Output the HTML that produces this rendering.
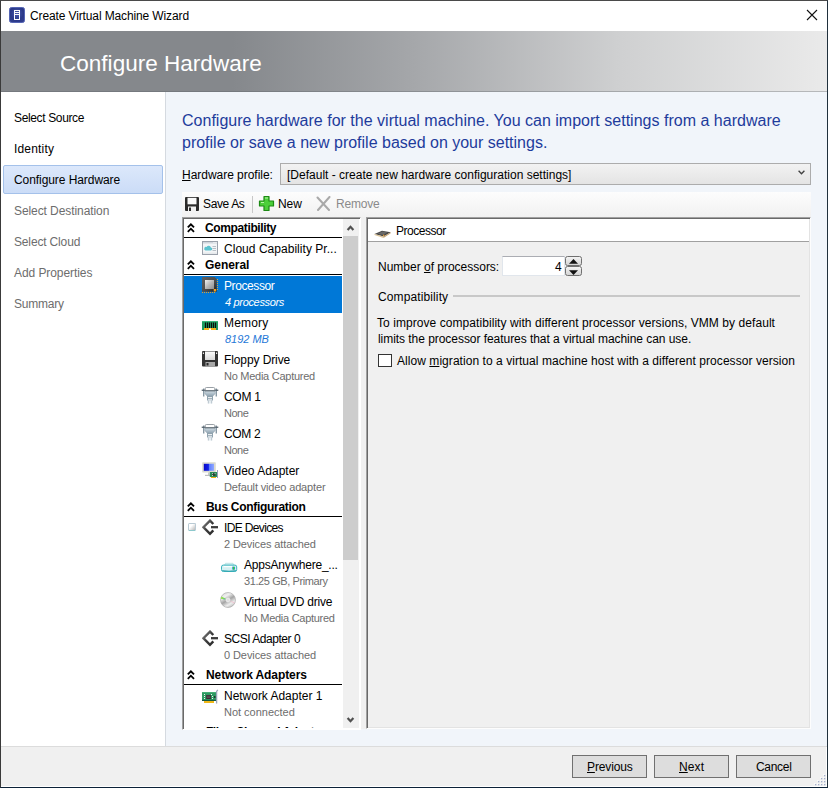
<!DOCTYPE html>
<html><head><meta charset="utf-8">
<style>
*{box-sizing:border-box;margin:0;padding:0}
html,body{width:828px;height:788px;overflow:hidden;background:#fff}
body{font-family:"Liberation Sans",sans-serif;font-size:12px;color:#000;position:relative}
div,svg{position:absolute}
#win{left:0;top:0;width:828px;height:788px;border:1px solid;border-color:#4a4a4a #20303c #0c2238 #3a3a3a;background:#fff}
#title{left:30px;top:8px;font-size:12px;line-height:16px;white-space:nowrap;letter-spacing:-0.11px}
#hdr{left:1px;top:31px;width:826px;height:61px;background:linear-gradient(90deg,#85888c 0%,#85888c 28%,#a5a7aa 50%,#cfd0d1 75%,#eaeaea 100%);border-bottom:1px solid rgba(90,94,100,0.35)}
#hdr span{position:absolute;left:59px;top:18px;font-size:22.5px;line-height:28px;color:#fff;white-space:nowrap}
#side{left:1px;top:92px;width:164px;height:654px;background:#fff}
#sideb{left:165px;top:92px;width:1px;height:654px;background:#d5dae0}
.nav{left:14px;font-size:12px;line-height:16px;white-space:nowrap;color:#000;letter-spacing:-0.15px}
.nav.dim{color:#6d6d6d}
#sel{left:3px;top:165px;width:160px;height:29px;border:1px solid #a4c1ea;border-radius:2px;background:linear-gradient(180deg,#dce8fb,#cbdcf7)}
#main{left:166px;top:92px;width:661px;height:654px;background:#f1f5fa}
#foot{left:1px;top:746px;width:826px;height:41px;background:#f0f0f0;border-top:1px solid #dcdcdc}
.btn{top:755px;width:75px;height:23px;border:1px solid #707070;background:#dddddd;font-size:12px;line-height:21px;text-align:center}
.h{left:182px;font-size:16px;line-height:22px;color:#1e3c9c;white-space:nowrap}
u{text-decoration:underline}
#hpl{left:182px;top:167px;line-height:16px;white-space:nowrap}
#combo{left:280px;top:163px;width:531px;height:22px;border:1px solid #acacac;background:linear-gradient(180deg,#f2f2f2,#e4e4e4)}
#combo span{position:absolute;left:5px;top:3px;line-height:16px;white-space:nowrap}
#tb{left:182px;top:192px;width:629px;height:25px;background:linear-gradient(180deg,#fdfdfd,#f1f1f1)}
.tbt{top:196px;line-height:16px;white-space:nowrap}
#tree{left:182px;top:217px;width:179px;height:513px;background:#fff;border:1px solid;border-color:#a0a0a0 #fff #fff #a0a0a0;box-shadow:inset 1px 1px 0 #696969,inset -1px -1px 0 #fff}
#treein{left:0;top:0;width:828px;height:728px;clip-path:inset(219px 486px 0 184px)}
.gh{left:205px;font-weight:bold;line-height:16px;white-space:nowrap;letter-spacing:-0.6px}
.chev{left:186.5px;width:8px;height:10px}
.gl{left:184px;width:158px;height:1px;background:#000}
.it{line-height:16px;white-space:nowrap;letter-spacing:-0.1px}
.sub{color:#6d6d6d;font-size:12px}
.subw{color:#fff;font-style:italic}
.subb{color:#1f78d8;font-style:italic}
.w{color:#fff}
.selrow{left:184px;width:158px;height:37px;background:#0078d7}
.clipb{left:183px;top:721px;width:160px;height:7px;overflow:hidden}
.exp{width:8px;height:8px;border:1px solid #b9cad4;border-bottom-color:#8cc8cc;border-radius:1.5px;background:linear-gradient(135deg,#fff 35%,#b8b8b8)}
#sb{left:343px;top:219px;width:16px;height:509px;background:#f0f0f0}
#thumb{left:343px;top:236px;width:15px;height:324px;background:#cdcdcd}
#pan{left:366px;top:217px;width:445px;height:512px;background:#f0f0f0;border:1px solid;border-color:#a0a0a0 #fdfdfd #fdfdfd #a0a0a0;box-shadow:inset 1px 1px 0 #696969,inset -1px -1px 0 #e3e3e3}
#panh{left:368px;top:219px;width:441px;height:23px;background:#fff;border-bottom:1px solid #a0a0a0}
.t{line-height:16px;white-space:nowrap}
#spin{left:502px;top:256px;width:63px;height:20px;background:#fff;border:1px solid #e1e6ec;border-top-color:#abadb3}
.sbn{left:565px;width:17px;height:10px;border:1px solid #707070;border-radius:2.5px;background:linear-gradient(#f4f4f4,#d4d4d4)}
#chk{left:378px;top:354px;width:14px;height:13px;border:1px solid #333;background:#fff}
</style></head><body>
<div id="win"></div>
<svg style="left:9px;top:7px" width="16" height="16" viewBox="0 0 16 16"><defs><radialGradient id="ti" cx="0.5" cy="0.4" r="0.7"><stop offset="0" stop-color="#4a5cb0"/><stop offset="0.6" stop-color="#2a3888"/><stop offset="1" stop-color="#323f90"/></radialGradient></defs><rect x="0.5" y="0.5" width="15" height="15" rx="2" fill="url(#ti)" stroke="#5565b4"/><rect x="5.5" y="3.5" width="5" height="9" fill="none" stroke="#fbfbfd" stroke-width="1"/><rect x="6" y="5" width="4" height="1" fill="#fbfbfd"/><rect x="6" y="7" width="4" height="1" fill="#fbfbfd"/></svg>
<div class="t" style="left:30px;top:8px;letter-spacing:-0.122px">Create Virtual Machine Wizard</div>
<svg style="left:804px;top:7px" width="16" height="16" viewBox="0 0 16 16"><path d="M3 3 L13 13 M13 3 L3 13" stroke="#111" stroke-width="1.1"/></svg>
<div id="hdr"></div><div class="t" style="font-size:22.5px;line-height:28px;color:#fff;left:60px;top:50px;letter-spacing:0.023px">Configure Hardware</div>
<div id="side"></div><div id="sideb"></div>
<div id="sel"></div>
<div class="t" style="left:14px;top:110px;letter-spacing:-0.358px">Select Source</div><div class="t" style="left:14px;top:141px;letter-spacing:0.171px">Identity</div><div class="t" style="left:14px;top:172px;letter-spacing:-0.071px">Configure Hardware</div><div class="t" style="color:#6d6d6d;left:14px;top:203px;letter-spacing:-0.082px">Select Destination</div><div class="t" style="color:#6d6d6d;left:14px;top:234px;letter-spacing:-0.155px">Select Cloud</div><div class="t" style="color:#6d6d6d;left:14px;top:265px;letter-spacing:-0.077px">Add Properties</div><div class="t" style="color:#6d6d6d;left:14px;top:296px;letter-spacing:-0.234px">Summary</div>
<div id="main"></div>
<div class="t" style="font-size:16px;line-height:22px;color:#1e3c9c;left:182px;top:110px;letter-spacing:0.012px">Configure hardware for the virtual machine. You can import settings from a hardware</div><div class="t" style="font-size:16px;line-height:22px;color:#1e3c9c;left:182px;top:132px;letter-spacing:-0.004px">profile or save a new profile based on your settings.</div><div class="t" style="left:182px;top:167px;letter-spacing:-0.031px"><u>H</u>ardware profile:</div>
<div id="combo">
<svg style="left:517px;top:6px" width="7" height="5" viewBox="0 0 7 5"><path d="M0.6 0.8 L3.5 3.8 L6.4 0.8" fill="none" stroke="#404040" stroke-width="1.3"/></svg></div><div class="t" style="left:287px;top:167px;letter-spacing:0.005px">[Default - create new hardware configuration settings]</div>
<div id="tb"></div>
<svg style="left:185px;top:197px" width="14" height="14" viewBox="0 0 14 14"><rect x="0" y="0" width="14" height="14" rx="1" fill="#2b2b2b"/><rect x="2.5" y="0.8" width="9" height="6.5" fill="#fafafa"/><rect x="3" y="9.5" width="8" height="4.5" fill="#f0f0f0"/><rect x="4" y="10.5" width="2" height="3.5" fill="#2b2b2b"/></svg>
<div class="t" style="left:203px;top:196px;letter-spacing:-0.367px">Save As</div>
<div style="left:252px;top:196px;width:1px;height:17px;background:#c8c8c8"></div>
<svg style="left:258px;top:195px" width="17" height="17" viewBox="0 0 17 17"><path d="M6 1.5h5v4.5h4.5v5H11v4.5H6V11H1.5V6H6z" fill="#4ccf3a" stroke="#1d8a14" stroke-width="1.2" stroke-linejoin="round"/><path d="M7 3h3M3 7.5h3" stroke="#b8f5a8" stroke-width="1"/></svg>
<div class="t" style="left:278px;top:196px;letter-spacing:-0.05px">New</div>
<svg style="left:316px;top:196px" width="15" height="15" viewBox="0 0 15 15"><path d="M1.5 1.5 L13 14 M13.5 1 L2 14" stroke="#a9a9a9" stroke-width="2" stroke-linecap="round"/></svg>
<div class="t" style="color:#8a8a8a;left:336px;top:196px;letter-spacing:-0.22px">Remove</div>
<div style="left:361px;top:217px;width:6px;height:512px;background:#f0f0f0"></div><div id="tree"></div>
<div id="treein"><div class="chev" style="top:223px"><svg width="8" height="10" viewBox="0 0 8 10"><path d="M0.8 4.4 L3.9 1.3 L7 4.4 M0.8 8.8 L3.9 5.7 L7 8.8" fill="none" stroke="#000" stroke-width="1.85"/></svg></div><div class="gl" style="top:237px"></div><div class="chev" style="top:260px"><svg width="8" height="10" viewBox="0 0 8 10"><path d="M0.8 4.4 L3.9 1.3 L7 4.4 M0.8 8.8 L3.9 5.7 L7 8.8" fill="none" stroke="#000" stroke-width="1.85"/></svg></div><div class="gl" style="top:274px"></div><div class="selrow" style="top:276px"></div><div class="chev" style="top:502px"><svg width="8" height="10" viewBox="0 0 8 10"><path d="M0.8 4.4 L3.9 1.3 L7 4.4 M0.8 8.8 L3.9 5.7 L7 8.8" fill="none" stroke="#000" stroke-width="1.85"/></svg></div><div class="gl" style="top:516px"></div><div class="exp" style="left:188px;top:523px"></div><div class="chev" style="top:670px"><svg width="8" height="10" viewBox="0 0 8 10"><path d="M0.8 4.4 L3.9 1.3 L7 4.4 M0.8 8.8 L3.9 5.7 L7 8.8" fill="none" stroke="#000" stroke-width="1.85"/></svg></div><div class="gl" style="top:684px"></div><div class="t" style="font-weight:bold;left:205px;top:220px;letter-spacing:-0.375px">Compatibility</div><div class="t" style="left:224px;top:241px;letter-spacing:0.033px">Cloud Capability Pr...</div><div class="t" style="font-weight:bold;left:205px;top:257px;letter-spacing:-0.051px">General</div><div class="t" style="color:#fff;left:224px;top:278px;letter-spacing:-0.4px">Processor</div><div class="t" style="color:#fff;font-style:italic;font-size:11px;left:225px;top:294px;letter-spacing:-0.327px">4 processors</div><div class="t" style="left:224px;top:315px;letter-spacing:0.18px">Memory</div><div class="t" style="color:#1f78d8;font-style:italic;font-size:11px;left:225px;top:331px;letter-spacing:-0.017px">8192 MB</div><div class="t" style="left:224px;top:352px;letter-spacing:-0.101px">Floppy Drive</div><div class="t" style="color:#6d6d6d;font-size:11px;left:224px;top:368px;letter-spacing:-0.263px">No Media Captured</div><div class="t" style="left:224px;top:389px;letter-spacing:-0.3px">COM 1</div><div class="t" style="color:#6d6d6d;font-size:11px;left:224px;top:405px;letter-spacing:-0.5px">None</div><div class="t" style="left:224px;top:426px;letter-spacing:-0.325px">COM 2</div><div class="t" style="color:#6d6d6d;font-size:11px;left:224px;top:442px;letter-spacing:-0.5px">None</div><div class="t" style="left:224px;top:463px;letter-spacing:0.016px">Video Adapter</div><div class="t" style="color:#6d6d6d;font-size:11px;left:224px;top:479px;letter-spacing:-0.15px">Default video adapter</div><div class="t" style="font-weight:bold;left:206px;top:499px;letter-spacing:-0.3px">Bus Configuration</div><div class="t" style="left:224px;top:520px;letter-spacing:-0.64px">IDE Devices</div><div class="t" style="color:#6d6d6d;font-size:11px;left:224px;top:536px;letter-spacing:-0.1px">2 Devices attached</div><div class="t" style="left:244px;top:557px;letter-spacing:-0.233px">AppsAnywhere_...</div><div class="t" style="color:#6d6d6d;font-size:11px;left:244px;top:573px;letter-spacing:-0.401px">31.25 GB, Primary</div><div class="t" style="left:244px;top:594px;letter-spacing:-0.206px">Virtual DVD drive</div><div class="t" style="color:#6d6d6d;font-size:11px;left:244px;top:610px;letter-spacing:-0.276px">No Media Captured</div><div class="t" style="left:224px;top:631px;letter-spacing:-0.469px">SCSI Adapter 0</div><div class="t" style="color:#6d6d6d;font-size:11px;left:224px;top:647px;letter-spacing:-0.088px">0 Devices attached</div><div class="t" style="font-weight:bold;left:206px;top:667px;letter-spacing:-0.087px">Network Adapters</div><div class="t" style="left:224px;top:688px;letter-spacing:-0.024px">Network Adapter 1</div><div class="t" style="color:#6d6d6d;font-size:11px;left:224px;top:704px;letter-spacing:-0.016px">Not connected</div><div class="t" style="font-weight:bold;left:206px;top:724px;letter-spacing:-0.461px">Fibre Channel Adapters</div><svg class="ic" style="left:202px;top:241px" width="16" height="14" viewBox="0 0 16 14"><rect x="0.5" y="0.5" width="15" height="13" fill="#f3f5f7" stroke="#9aa1ab"/><rect x="1" y="1" width="14" height="1.5" fill="#cfd5dc"/><rect x="11.5" y="1" width="1" height="1" fill="#fff"/><rect x="13.5" y="1" width="1" height="1" fill="#fff"/><path d="M3.5 9.5h5.2a1.5 1.5 0 0 0 .2-3 2.3 2.3 0 0 0-4.3-.5A1.8 1.8 0 0 0 3.5 9.5z" fill="#5cc3cf"/><rect x="10.5" y="5" width="3.5" height="1" fill="#b8bfc6"/><rect x="10.5" y="7" width="3.5" height="1" fill="#b8bfc6"/><rect x="10.5" y="9" width="3.5" height="1" fill="#b8bfc6"/><rect x="1" y="11.5" width="14" height="1.5" fill="#e6e9ec"/></svg><svg class="ic" style="left:202px;top:277px" width="17" height="17" viewBox="0 0 17 17"><defs><linearGradient id="cg" x1="0" y1="0" x2="1" y2="1"><stop offset="0" stop-color="#f0f0f0"/><stop offset="0.5" stop-color="#b8b8b8"/><stop offset="1" stop-color="#8e8e8e"/></linearGradient><linearGradient id="cb" x1="0" y1="0" x2="1" y2="1"><stop offset="0" stop-color="#606060"/><stop offset="0.6" stop-color="#4a4a4a"/><stop offset="1" stop-color="#1c1c1c"/></linearGradient></defs><path d="M0 0H12.5L14.7 2V14.7H0z" fill="url(#cb)"/><rect x="3" y="3" width="9" height="9" fill="url(#cg)"/><rect x="11.7" y="12" width="2.5" height="2.5" fill="#f0a020"/><path d="M0 15.5h14" stroke="#e0a030" stroke-width="1" stroke-dasharray="1 1"/><path d="M15.5 2v11" stroke="#e0a030" stroke-width="1" stroke-dasharray="1 1"/></svg><svg class="ic" style="left:202px;top:321px" width="16" height="9" viewBox="0 0 16 9"><rect x="0" y="0" width="16" height="9" rx="0.5" fill="#1d9a5f"/><rect x="0" y="0" width="16" height="1" fill="#3cb47a"/><rect x="2" y="7" width="12" height="2" fill="#f4b41c"/><rect x="7" y="7.5" width="2" height="1.5" fill="#fff"/><path d="M3.5 1.5v5.5M5.5 1.5v5.5M7.5 1.5v5.5M9.5 1.5v5.5M11.5 1.5v5.5M13.5 1.5v5.5" stroke="#0c0c0c" stroke-width="1.15"/></svg><svg class="ic" style="left:202px;top:351px" width="16" height="16" viewBox="0 0 16 16"><defs><linearGradient id="fg" x1="0" y1="0" x2="0" y2="1"><stop offset="0" stop-color="#fdfdfd"/><stop offset="1" stop-color="#d8d8d8"/></linearGradient></defs><rect x="0" y="0" width="16" height="15.5" rx="1" fill="#333"/><rect x="3" y="0.5" width="10" height="8.5" fill="url(#fg)"/><rect x="3.5" y="11" width="9.5" height="4.5" fill="#a8a8a8"/><rect x="4.5" y="12" width="2" height="2.5" fill="#2a2a2a"/><rect x="0.8" y="1.5" width="1.2" height="1.5" fill="#e8e8e8"/><rect x="14" y="1.5" width="1.2" height="1.5" fill="#e8e8e8"/></svg><svg class="ic" style="left:201px;top:387px" width="18" height="17" viewBox="0 0 18 17"><defs><linearGradient id="cm387" x1="0" y1="0" x2="0" y2="1"><stop offset="0" stop-color="#d4e0e8"/><stop offset="1" stop-color="#8a9eac"/></linearGradient></defs><rect x="2" y="1.5" width="1.4" height="8" fill="#8798a4"/><rect x="14.6" y="1.5" width="1.4" height="8" fill="#8798a4"/><rect x="0.7" y="2.6" width="16.6" height="1.3" fill="#55626c"/><rect x="4.3" y="0.5" width="9.4" height="3" rx="1" fill="#fff" stroke="#8d959c" stroke-width="0.9"/><path d="M3.8 3.8H14.2V6.3Q13 8.8 11 9.5H7Q5 8.8 3.8 6.3z" fill="url(#cm387)" stroke="#8fa1ad" stroke-width="0.5"/><rect x="4" y="3.4" width="10" height="0.9" fill="#5a646c"/><rect x="6" y="9" width="6" height="4.5" fill="#8fa2ae"/><rect x="7" y="10" width="4" height="0.9" fill="#f4f7f9"/><rect x="7" y="11.8" width="4" height="0.9" fill="#f4f7f9"/><rect x="7" y="13.5" width="4" height="3" fill="#e6edf1"/><path d="M7.3 13.5v3M10.7 13.5v3" stroke="#a9b8c2" stroke-width="0.8"/></svg><svg class="ic" style="left:201px;top:424px" width="18" height="17" viewBox="0 0 18 17"><defs><linearGradient id="cm424" x1="0" y1="0" x2="0" y2="1"><stop offset="0" stop-color="#d4e0e8"/><stop offset="1" stop-color="#8a9eac"/></linearGradient></defs><rect x="2" y="1.5" width="1.4" height="8" fill="#8798a4"/><rect x="14.6" y="1.5" width="1.4" height="8" fill="#8798a4"/><rect x="0.7" y="2.6" width="16.6" height="1.3" fill="#55626c"/><rect x="4.3" y="0.5" width="9.4" height="3" rx="1" fill="#fff" stroke="#8d959c" stroke-width="0.9"/><path d="M3.8 3.8H14.2V6.3Q13 8.8 11 9.5H7Q5 8.8 3.8 6.3z" fill="url(#cm424)" stroke="#8fa1ad" stroke-width="0.5"/><rect x="4" y="3.4" width="10" height="0.9" fill="#5a646c"/><rect x="6" y="9" width="6" height="4.5" fill="#8fa2ae"/><rect x="7" y="10" width="4" height="0.9" fill="#f4f7f9"/><rect x="7" y="11.8" width="4" height="0.9" fill="#f4f7f9"/><rect x="7" y="13.5" width="4" height="3" fill="#e6edf1"/><path d="M7.3 13.5v3M10.7 13.5v3" stroke="#a9b8c2" stroke-width="0.8"/></svg><svg class="ic" style="left:202px;top:462px" width="17" height="17" viewBox="0 0 17 17"><defs><linearGradient id="vs" x1="0" y1="0" x2="1" y2="0"><stop offset="0" stop-color="#0808c8"/><stop offset="0.45" stop-color="#1020e8"/><stop offset="0.55" stop-color="#6080ff"/><stop offset="1" stop-color="#90a8ff"/></linearGradient></defs><rect x="0.2" y="0.2" width="13.6" height="10.3" rx="0.8" fill="#d9d9d0"/><rect x="1.8" y="1.8" width="10.2" height="7" fill="url(#vs)"/><rect x="6" y="10.5" width="1.6" height="2.5" fill="#c8c8c4"/><rect x="3" y="12.8" width="5" height="1.2" fill="#bdbdbd"/><rect x="7.8" y="10" width="7.4" height="5" fill="#2a8c58"/><rect x="10" y="11.2" width="3.4" height="2.6" fill="#274036"/><rect x="10" y="11.2" width="0.9" height="0.9" fill="#e8f0e8"/><rect x="12.6" y="11.2" width="0.9" height="0.9" fill="#e8f0e8"/><rect x="10" y="13" width="0.9" height="0.9" fill="#e8f0e8"/><rect x="9" y="15" width="5" height="1" fill="#f0b418"/><rect x="15" y="8" width="1" height="8" fill="#9aa0bc"/></svg><svg class="ic" style="left:202px;top:519px" width="16" height="17" viewBox="0 0 16 17"><defs><linearGradient id="sg519" x1="0" y1="0" x2="1" y2="1"><stop offset="0" stop-color="#8a8a8a"/><stop offset="0.5" stop-color="#3a3a3a"/><stop offset="1" stop-color="#2c2c2c"/></linearGradient></defs><path d="M11.3 5 L8 1.6 L1.4 8.2 L8 14.8 L11.3 11.4" fill="none" stroke="url(#sg519)" stroke-width="2.4" stroke-linejoin="miter"/><path d="M9 8.2 H16" stroke="#3c3c3c" stroke-width="2.3"/></svg><svg class="ic" style="left:202px;top:630px" width="16" height="17" viewBox="0 0 16 17"><defs><linearGradient id="sg630" x1="0" y1="0" x2="1" y2="1"><stop offset="0" stop-color="#8a8a8a"/><stop offset="0.5" stop-color="#3a3a3a"/><stop offset="1" stop-color="#2c2c2c"/></linearGradient></defs><path d="M11.3 5 L8 1.6 L1.4 8.2 L8 14.8 L11.3 11.4" fill="none" stroke="url(#sg630)" stroke-width="2.4" stroke-linejoin="miter"/><path d="M9 8.2 H16" stroke="#3c3c3c" stroke-width="2.3"/></svg><svg class="ic" style="left:221px;top:562px" width="17" height="11" viewBox="0 0 17 11"><path d="M4.5 1.3H12L13 3.3H3.5z" fill="#e4f5f6" stroke="#a8dde0" stroke-width="0.7"/><rect x="0.5" y="3.1" width="15.2" height="6.4" rx="1.8" fill="#d6f0f2" stroke="#3db4be" stroke-width="1"/><rect x="2.5" y="4.1" width="8.5" height="1.1" fill="#fff"/><path d="M1.3 8.6 Q8 9.8 14.9 8.6" stroke="#2aa0ac" stroke-width="0.9" fill="none"/><rect x="11.2" y="4.8" width="2.8" height="2.8" fill="#3a8ad8"/><rect x="12" y="4.8" width="1.2" height="2.8" fill="#30d828"/></svg><svg class="ic" style="left:220.2px;top:592.2px" width="16" height="16" viewBox="0 0 16 16"><defs><linearGradient id="dg" x1="0.2" y1="0" x2="0.8" y2="1"><stop offset="0" stop-color="#d8d8d8"/><stop offset="0.25" stop-color="#f0f0f0"/><stop offset="0.5" stop-color="#a4a4a4"/><stop offset="0.75" stop-color="#eeeeee"/><stop offset="1" stop-color="#b4b4b4"/></linearGradient></defs><circle cx="8" cy="8" r="7.5" fill="url(#dg)" stroke="#a0a0a0" stroke-width="0.6"/><path d="M8 8 L0.8 6.8 A7.5 7.5 0 0 1 1.6 4.6Z" fill="#80dc30" opacity="0.85"/><path d="M8 8 L3 7.2 L3.6 6Z" fill="#40b0c0" opacity="0.6"/><path d="M8 8 L14.8 10.2 A7.5 7.5 0 0 1 14 11.6Z" fill="#f0c0d0" opacity="0.8"/><circle cx="8" cy="8" r="2.4" fill="#f4f4f4" stroke="#c4c4c4" stroke-width="0.5"/><circle cx="8" cy="8" r="1" fill="#fff" stroke="#bdbdbd" stroke-width="0.5"/></svg><svg class="ic" style="left:202px;top:689px" width="17" height="15" viewBox="0 0 17 15"><rect x="0" y="3" width="14" height="9" fill="#2e9a62"/><rect x="0" y="3" width="14" height="0.8" fill="#4cb27c"/><rect x="0" y="10.8" width="14" height="1.2" fill="#125840"/><rect x="4.2" y="6" width="4.8" height="4" fill="#3a2c34"/><rect x="4.8" y="6.8" width="3.6" height="0.7" fill="#6a5a62"/><rect x="4.8" y="8.3" width="3.6" height="0.7" fill="#6a5a62"/><g fill="#eef4ee"><rect x="2" y="5" width="1" height="1"/><rect x="2" y="7" width="1" height="1"/><rect x="2" y="9" width="1" height="1"/><rect x="9" y="5" width="1" height="1"/><rect x="10" y="7" width="1" height="1"/><rect x="10" y="9" width="1" height="1"/></g><rect x="12" y="7" width="1.5" height="2" fill="#1c3c30"/><rect x="2" y="12" width="10" height="2" fill="#f0b818"/><path d="M14.6 14.5V2.5L15.8 0.8" stroke="#9ca4b8" stroke-width="1.3" fill="none"/></svg></div>
<div id="sb"></div><div id="thumb"></div>
<svg style="left:346px;top:224px" width="9" height="8" viewBox="0 0 9 8"><path d="M1.6 6 L4.5 2.8 L7.4 6" fill="none" stroke="#505050" stroke-width="2.2"/></svg>
<svg style="left:346px;top:716px" width="9" height="8" viewBox="0 0 9 8"><path d="M1.6 2 L4.5 5.2 L7.4 2" fill="none" stroke="#505050" stroke-width="2.2"/></svg>
<div id="pan"></div><div id="panh"></div>
<svg style="left:373.5px;top:229.5px" width="18" height="9" viewBox="0 0 18 9"><path d="M0.5 4 L8 0.7 L16.7 2.2 L9.5 6.6Z" fill="#484848"/><path d="M3.5 3.7 L8.5 1.5 L13.5 2.4 L8.8 4.9Z" fill="#686868"/><path d="M0.5 4 L9.5 6.6 L9.5 7.9 L0.5 5.1Z" fill="#dcc498"/><path d="M9.5 6.6 L16.7 2.2 L16.7 3.3 L9.5 7.9Z" fill="#c0a070"/><rect x="9" y="4.7" width="1.3" height="1.2" fill="#f0a030"/></svg>
<div class="t" style="left:396px;top:223px;letter-spacing:-0.464px">Processor</div>
<div class="t" style="left:378px;top:259px;letter-spacing:-0.01px">Number <u>o</u>f processors:</div>
<div id="spin"></div><div class="t" style="left:555px;top:259px;letter-spacing:0px">4</div>
<div class="sbn" style="top:256px"><svg style="left:3px;top:2px" width="9" height="5" viewBox="0 0 9 5"><path d="M0 4.8 L4.5 0 L9 4.8Z" fill="#111"/></svg></div>
<div class="sbn" style="top:266px"><svg style="left:3px;top:2.5px" width="9" height="5" viewBox="0 0 9 5"><path d="M0 0.2 L4.5 5 L9 0.2Z" fill="#111"/></svg></div>
<div class="t" style="left:378px;top:289px;letter-spacing:0.116px">Compatibility</div>
<div style="left:453px;top:295px;width:347px;height:2px;background:#c8c8c8"></div>
<div class="t" style="left:377px;top:315px;letter-spacing:0.064px">To improve compatibility with different processor versions, VMM by default</div>
<div class="t" style="left:378px;top:331px;letter-spacing:-0.048px">limits the processor features that a virtual machine can use.</div>
<div id="chk"></div>
<div class="t" style="left:397px;top:353px;letter-spacing:0.052px">Allow <u>m</u>igration to a virtual machine host with a different processor version</div>
<div id="foot"></div>
<div class="btn" style="left:572px"></div><div class="t" style="left:587px;top:759px;letter-spacing:-0.129px"><u>P</u>revious</div>
<div class="btn" style="left:654px"></div><div class="t" style="left:679px;top:759px;letter-spacing:0.099px"><u>N</u>ext</div>
<div class="btn" style="left:736px"></div><div class="t" style="left:756px;top:759px;letter-spacing:-0.3px">Cancel</div>
<svg style="left:814px;top:773.5px" width="12" height="12" viewBox="0 0 12 12"><rect x="9.2" y="0.19999999999999996" width="1.2" height="1.2" fill="#fff"/><rect x="10" y="1" width="1.3" height="1.3" fill="#a4aecb"/><rect x="6.2" y="3.2" width="1.2" height="1.2" fill="#fff"/><rect x="7" y="4" width="1.3" height="1.3" fill="#a4aecb"/><rect x="9.2" y="3.2" width="1.2" height="1.2" fill="#fff"/><rect x="10" y="4" width="1.3" height="1.3" fill="#a4aecb"/><rect x="3.2" y="6.2" width="1.2" height="1.2" fill="#fff"/><rect x="4" y="7" width="1.3" height="1.3" fill="#a4aecb"/><rect x="6.2" y="6.2" width="1.2" height="1.2" fill="#fff"/><rect x="7" y="7" width="1.3" height="1.3" fill="#a4aecb"/><rect x="9.2" y="6.2" width="1.2" height="1.2" fill="#fff"/><rect x="10" y="7" width="1.3" height="1.3" fill="#a4aecb"/><rect x="0.19999999999999996" y="9.2" width="1.2" height="1.2" fill="#fff"/><rect x="1" y="10" width="1.3" height="1.3" fill="#a4aecb"/><rect x="3.2" y="9.2" width="1.2" height="1.2" fill="#fff"/><rect x="4" y="10" width="1.3" height="1.3" fill="#a4aecb"/><rect x="6.2" y="9.2" width="1.2" height="1.2" fill="#fff"/><rect x="7" y="10" width="1.3" height="1.3" fill="#a4aecb"/><rect x="9.2" y="9.2" width="1.2" height="1.2" fill="#fff"/><rect x="10" y="10" width="1.3" height="1.3" fill="#a4aecb"/></svg><div style="left:826px;top:747px;width:1px;height:40px;background:#fff"></div><div style="left:1px;top:786px;width:826px;height:1px;background:#fff"></div>
</body></html>
